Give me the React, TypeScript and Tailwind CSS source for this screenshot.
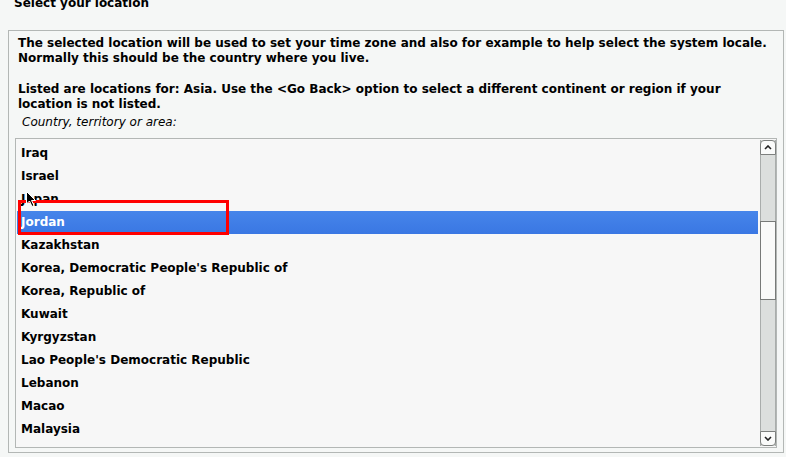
import React from "react";

const items = [
  "Iraq",
  "Israel",
  "Japan",
  "Jordan",
  "Kazakhstan",
  "Korea, Democratic People's Republic of",
  "Korea, Republic of",
  "Kuwait",
  "Kyrgyzstan",
  "Lao People's Democratic Republic",
  "Lebanon",
  "Macao",
  "Malaysia",
];

export default function App() {
  return (
    <div
      className="relative w-[786px] h-[457px] overflow-hidden bg-[#f5f7f6] text-black"
      style={{ fontFamily: '"DejaVu Sans", sans-serif' }}
    >
      <div className="pl-[14px] mt-[-4px] h-[15px] leading-[15px] text-[12px] font-bold">
        Select your location
      </div>
      <div className="ml-[8px] mt-[19px] w-[776px] h-[423px] border border-[#b3b7b5] pt-[5px] px-[6px] pb-[4px] flex flex-col">
        <div className="px-[3px] text-[12px] leading-[15px] font-bold">
          <p>
            The selected location will be used to set your time zone and also for example to help select the system locale.
            <br />
            Normally this should be the country where you live.
          </p>
          <p className="mt-[16px]">
            Listed are locations for: Asia. Use the &lt;Go Back&gt; option to select a different continent or region if your
            <br />
            location is not listed.
          </p>
        </div>
        <div className="mt-[3px] pl-[7px] text-[12px] leading-[15px] italic">Country, territory or area:</div>
        <div className="mt-[8px] flex-1 min-h-0 border border-[#b3b7b5] bg-[#f7f7f7] flex overflow-hidden">
          <div className="flex-1 pt-[3px] pl-[1px] pr-[2px] overflow-hidden">
            {items.map((it) => (
              <div
                key={it}
                className={
                  "h-[23px] leading-[23px] pl-[4px] text-[12px] font-bold whitespace-nowrap " +
                  (it === "Jordan" ? "bg-gradient-to-b from-[#4685ea] to-[#3a77e3] text-white" : "")
                }
              >
                {it}
              </div>
            ))}
          </div>
          <div className="w-[16px] my-[1px] flex flex-col bg-[#dcdfdd] border-x border-[#a9adab]">
            <div className="h-[15px] bg-[#fafbfa] border border-[#7d807e] rounded-t-[4px] -mx-[1px] flex items-center justify-center">
              <svg width="8" height="5" viewBox="0 0 8 5">
                <path d="M1 4 L4 1 L7 4" stroke="#222" strokeWidth="1.6" fill="none" />
              </svg>
            </div>
            <div className="h-[66px]" />
            <div className="h-[79px] bg-[#f9faf9] border border-[#777a78] -mx-[1px]" />
            <div className="flex-1" />
            <div className="h-[15px] bg-[#fafbfa] border border-[#7d807e] rounded-b-[4px] -mx-[1px] flex items-center justify-center">
              <svg width="8" height="5" viewBox="0 0 8 5">
                <path d="M1 1 L4 4 L7 1" stroke="#222" strokeWidth="1.6" fill="none" />
              </svg>
            </div>
          </div>
        </div>
      </div>
      <div className="absolute left-[18px] top-[200px] w-[211px] h-[35px] border-[3px] border-[#ff0000]" />
      <svg className="absolute left-[26px] top-[191px]" width="11" height="17" viewBox="0 0 11 17">
        <path d="M0.5 0.5 L0.5 13 L3.5 10 L6 15.5 L8 14.5 L5.5 9.5 L9.5 9.5 Z" fill="#000" stroke="#fff" strokeWidth="1" />
      </svg>
    </div>
  );
}
